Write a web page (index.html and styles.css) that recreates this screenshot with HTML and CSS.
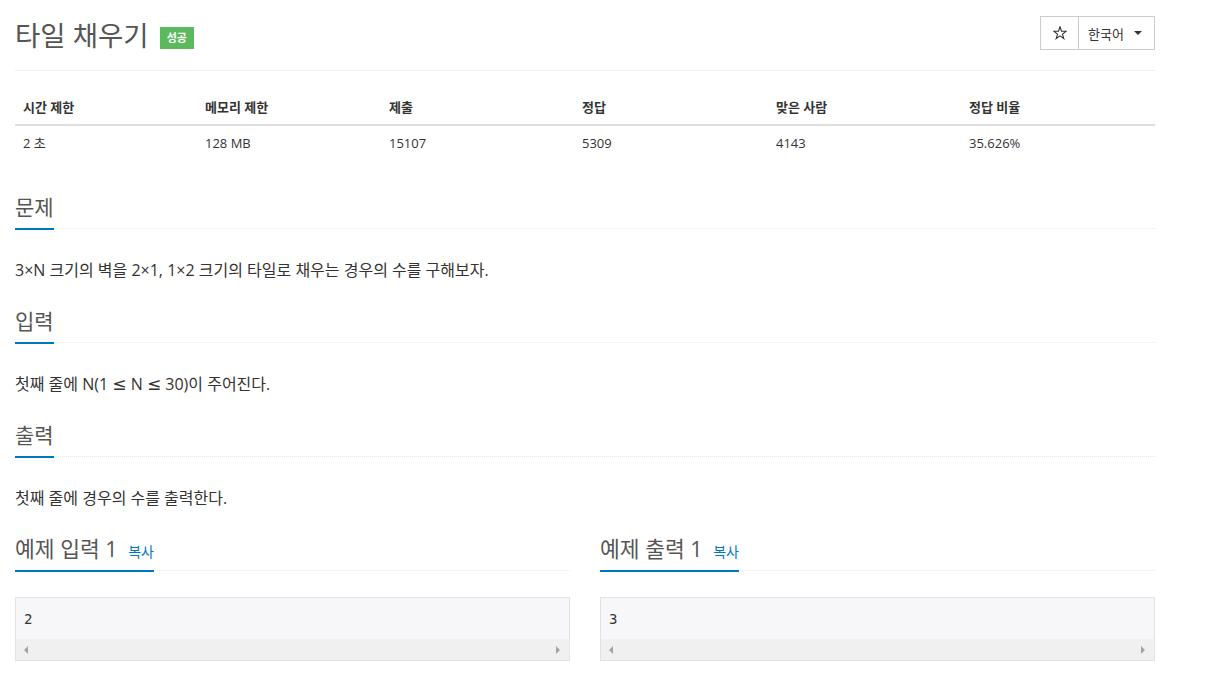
FILE: index.html
```html
<!DOCTYPE html>
<html lang="ko">
<head>
<meta charset="utf-8">
<title>타일 채우기</title>
<link rel="stylesheet" href="styles.css">
</head>
<body>
<div class="container">
  <div class="page-header">
    <h1 class="title"><span class="title-text">타일 채우기</span><span class="badge">성공</span></h1>
    <div class="btn-group">
      <button class="btn btn-star" type="button">
        <svg class="star" width="14" height="14" viewBox="0 0 14 14"><polygon points="7,0.8 8.53,5.2 13.18,5.29 9.47,8.1 10.82,12.56 7,9.9 3.18,12.56 4.53,8.1 0.82,5.29 5.47,5.2" fill="none" stroke="#333" stroke-width="1.1" stroke-linejoin="miter"/></svg>
      </button>
      <button class="btn btn-lang" type="button">한국어<span class="caret"></span></button>
    </div>
  </div>

  <table class="info">
    <thead>
      <tr><th>시간 제한</th><th>메모리 제한</th><th>제출</th><th>정답</th><th>맞은 사람</th><th>정답 비율</th></tr>
    </thead>
    <tbody>
      <tr><td>2 초</td><td>128 MB</td><td>15107</td><td>5309</td><td>4143</td><td>35.626%</td></tr>
    </tbody>
  </table>

  <section class="sec">
    <div class="headline"><h2>문제</h2></div>
    <p class="text">3×N 크기의 벽을 2×1, 1×2 크기의 타일로 채우는 경우의 수를 구해보자.</p>
  </section>

  <section class="sec">
    <div class="headline"><h2>입력</h2></div>
    <p class="text">첫째 줄에 N(1 <span class="op">≤</span> N <span class="op">≤</span> 30)이 주어진다.</p>
  </section>

  <section class="sec">
    <div class="headline"><h2>출력</h2></div>
    <p class="text">첫째 줄에 경우의 수를 출력한다.</p>
  </section>

  <div class="samples">
    <section class="sample">
      <div class="headline headline-sample"><h2>예제 입력 1 <span class="copy">복사</span></h2></div>
      <div class="pre-box">
        <pre class="sample-data">2</pre>
        <div class="hscroll"><span class="arrow arrow-left"></span><span class="arrow arrow-right"></span></div>
      </div>
    </section>
    <section class="sample">
      <div class="headline headline-sample"><h2>예제 출력 1 <span class="copy">복사</span></h2></div>
      <div class="pre-box">
        <pre class="sample-data">3</pre>
        <div class="hscroll"><span class="arrow arrow-left"></span><span class="arrow arrow-right"></span></div>
      </div>
    </section>
  </div>
</div>
</body>
</html>
```

FILE: styles.css
```css
html, body {
  margin: 0;
  padding: 0;
  background: #fff;
}
body {
  font-family: "Open Sans", "Noto Sans CJK KR", sans-serif;
  color: #333;
  font-size: 13px;
}
.container {
  width: 1140px;
  margin-left: 15px;
}
.page-header {
  display: flex;
  justify-content: space-between;
  align-items: flex-start;
  padding: 16px 0 20px;
  border-bottom: 1px solid #eee;
}
.title {
  margin: 5px 0 0;
  font-size: 27.5px;
  line-height: 29px;
  font-weight: 400;
  color: #555;
  display: flex;
  align-items: center;
}
.badge {
  display: inline-block;
  margin-left: 11px;
  margin-top: 4px;
  background: #5cb85c;
  color: #fff;
  font-size: 11px;
  font-weight: 700;
  line-height: 22px;
  height: 22px;
  padding: 0 7px;
}
.btn-group {
  display: flex;
}
.btn {
  font-family: "Open Sans", "Noto Sans CJK KR", sans-serif;
  background: #fff;
  border: 1px solid #ccc;
  height: 34px;
  margin: 0;
  color: #333;
  display: flex;
  align-items: center;
  cursor: pointer;
}
.btn-star {
  width: 39px;
  justify-content: center;
  padding: 0;
}
.btn-lang {
  width: 76px;
  border-left: none;
  padding: 0 0 0 9px;
  font-size: 13px;
}
.star {
  display: block;
}
.caret {
  display: inline-block;
  width: 0;
  height: 0;
  margin-left: 10px;
  border-top: 4px solid #333;
  border-left: 4px solid transparent;
  border-right: 4px solid transparent;
}

.info {
  width: 100%;
  border-collapse: collapse;
  margin: 19px 0 35px;
}
.info th, .info td {
  text-align: left;
  padding: 8px;
  line-height: 18px;
}
.info th {
  font-size: 13px;
  font-weight: 700;
  border-bottom: 2px solid #ddd;
}
.info td {
  font-size: 13px;
}
.info th:nth-child(1) { width: 166px; }
.info th:nth-child(2) { width: 168px; }
.info th:nth-child(3) { width: 177px; }
.info th:nth-child(4) { width: 178px; }
.info th:nth-child(5) { width: 177px; }

.headline {
  border-bottom: 1px dotted #e4e9f0;
  margin-bottom: 29px;
}
.headline h2 {
  display: inline-block;
  margin: 0 0 -2px;
  padding-bottom: 9px;
  border-bottom: 2px solid #0076c0;
  font-size: 21px;
  line-height: 24px;
  height: 24px;
  font-weight: 400;
  color: #555;
}
.text {
  margin: 0 0 27px;
  font-size: 16px;
  line-height: 24px;
  color: #333;
}
.op {
  font-family: "DejaVu Sans", sans-serif;
  font-size: 17px;
}
.copy {
  font-size: 14px;
  line-height: 1;
  color: #0076c0;
  margin-left: 5px;
}
.samples {
  display: grid;
  grid-template-columns: 1fr 1fr;
  column-gap: 30px;
}
.headline-sample {
  margin-bottom: 26px;
}
.headline-sample h2 {
  font-size: 21.5px;
}
.pre-box {
  border: 1px solid #e1e1e8;
  background: #f7f7f9;
}
.sample-data {
  margin: 0;
  padding: 11px 8px 10px;
  font-family: "DejaVu Sans Mono", monospace;
  font-size: 14px;
  line-height: 20px;
  color: #333;
}
.hscroll {
  height: 21px;
  background: #f0f0f0;
  display: flex;
  justify-content: space-between;
  align-items: center;
  padding: 0 9px 0 8px;
}
.arrow {
  width: 0;
  height: 0;
  border-top: 4px solid transparent;
  border-bottom: 4px solid transparent;
}
.arrow-left {
  border-right: 4px solid #a3a3a3;
}
.arrow-right {
  border-left: 4px solid #a3a3a3;
}
```
